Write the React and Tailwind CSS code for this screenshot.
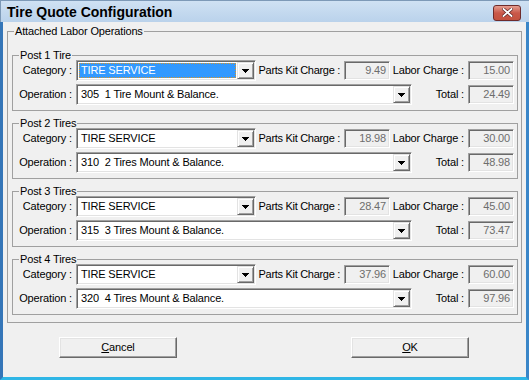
import React from 'react';

const posts = [
  { title: 'Post 1 Tire', op: '305  1 Tire Mount & Balance.', parts: '9.49', labor: '15.00', total: '24.49', focus: true },
  { title: 'Post 2 Tires', op: '310  2 Tires Mount & Balance.', parts: '18.98', labor: '30.00', total: '48.98' },
  { title: 'Post 3 Tires', op: '315  3 Tires Mount & Balance.', parts: '28.47', labor: '45.00', total: '73.47' },
  { title: 'Post 4 Tires', op: '320  4 Tires Mount & Balance.', parts: '37.96', labor: '60.00', total: '97.96' },
];

const sunken =
  'border border-t-[#a0a0a0] border-l-[#a0a0a0] border-r-white border-b-white shadow-[inset_1px_1px_0_#696969,inset_-1px_-1px_0_#e3e3e3] p-px';

function DropButton() {
  return (
    <div className="w-[17px] h-full bg-[#f0f0f0] border border-t-[#e3e3e3] border-l-[#e3e3e3] border-r-[#696969] border-b-[#696969] shadow-[inset_1px_1px_0_#fff,inset_-1px_-1px_0_#a0a0a0] flex items-center justify-center">
      <svg width="7" height="4" viewBox="0 0 7 4" shapeRendering="crispEdges">
        <path d="M0 0h7v1H0zM1 1h5v1H1zM2 2h3v1H2zM3 3h1v1H3z" fill="#000" />
      </svg>
    </div>
  );
}

function Combo({ className, text, focus }) {
  return (
    <div className={`${sunken} bg-white h-[21px] flex shrink-0 ${className}`}>
      <div className="flex-1 flex min-w-0">
        {focus ? (
          <div className="flex-1 m-px bg-[#3399ff] text-white border border-dotted border-[#d9952b] flex items-center pl-px whitespace-pre">
            {text}
          </div>
        ) : (
          <div className="flex-1 flex items-center pl-[3px] whitespace-pre">{text}</div>
        )}
      </div>
      <DropButton />
    </div>
  );
}

function Value({ children }) {
  return (
    <div className={`${sunken} w-[46px] h-[19px] shrink-0 bg-[#f0f0f0] text-[#6d6d6d] flex items-center justify-end pr-[3px]`}>
      {children}
    </div>
  );
}

function PostGroup({ p }) {
  return (
    <fieldset className="border border-[#a0a0a0] pb-[5px]">
      <legend className="ml-[6px] px-px leading-[10px]">{p.title}</legend>
      <div className="flex items-center h-[21px]">
        <span className="w-[59px] shrink-0 text-right">Category :</span>
        <Combo className="ml-[4px] w-[180px]" text="TIRE SERVICE" focus={p.focus} />
        <span className="w-[88px] shrink-0 text-right pr-[4px] whitespace-nowrap tracking-[-0.3px]">Parts Kit Charge :</span>
        <Value>{p.parts}</Value>
        <span className="w-[78px] shrink-0 text-right pr-[4px] whitespace-nowrap">Labor Charge :</span>
        <Value>{p.labor}</Value>
      </div>
      <div className="flex items-center h-[21px] mt-[3px]">
        <span className="w-[59px] shrink-0 text-right">Operation :</span>
        <Combo className="ml-[4px] w-[336px]" text={p.op} />
        <span className="w-[56px] shrink-0 text-right pr-[4px]">Total :</span>
        <Value>{p.total}</Value>
      </div>
    </fieldset>
  );
}

function Button({ children }) {
  return (
    <button className="w-[118px] h-[21px] bg-[#f0f0f0] border border-t-white border-l-white border-r-[#696969] border-b-[#696969] shadow-[inset_-1px_-1px_0_#a0a0a0,inset_1px_1px_0_#e3e3e3] flex items-center justify-center text-black">
      {children}
    </button>
  );
}

export default function App() {
  return (
    <div className="w-[529px] h-[380px] flex flex-col bg-[#f0f0f0] font-['Liberation_Sans',Arial,sans-serif] text-[11px] tracking-[-0.15px] text-black overflow-hidden">
      <div className="h-[22px] shrink-0 flex items-center justify-between pl-[6px] pr-[8px] bg-gradient-to-b from-[#cfe1f3] to-[#bad2eb] border-t border-l border-[#7d99b7]">
        <span className="font-bold text-[14px] leading-none tracking-normal">Tire Quote Configuration</span>
        <div className="w-[28px] h-[16px] mt-[2px] rounded-[3px] border border-[#6e2b2b] bg-gradient-to-b from-[#e49d90] via-[#c9584a] to-[#c4523f] flex items-center justify-center">
          <svg width="11" height="9" viewBox="0 0 11 9">
            <path d="M1.5 1l8 7M9.5 1l-8 7" stroke="#5a2020" strokeWidth="3.2" strokeLinecap="square" />
            <path d="M1.5 1l8 7M9.5 1l-8 7" stroke="#fff" strokeWidth="1.8" strokeLinecap="square" />
          </svg>
        </div>
      </div>
      <div className="flex-1 flex flex-col border-l-[3px] border-r-[3px] border-b-[3px] border-l-[#3576b8] border-r-[#3a86c8] border-b-[#2fb6e6]">
        <fieldset className="mt-[4px] mx-[4px] border border-[#a0a0a0] pl-[4px] pr-[3px] pt-[14px] pb-[7px]">
          <legend className="ml-[2px] px-px leading-[10px]">Attached Labor Operations</legend>
          <div className="flex flex-col gap-[7px]">
            {posts.map((p) => (
              <PostGroup key={p.title} p={p} />
            ))}
          </div>
        </fieldset>
        <div className="flex mt-[14px] pl-[56px] gap-[174px]">
          <Button>
            <span><span className="underline">C</span>ancel</span>
          </Button>
          <Button>
            <span><span className="underline">O</span>K</span>
          </Button>
        </div>
      </div>
    </div>
  );
}
